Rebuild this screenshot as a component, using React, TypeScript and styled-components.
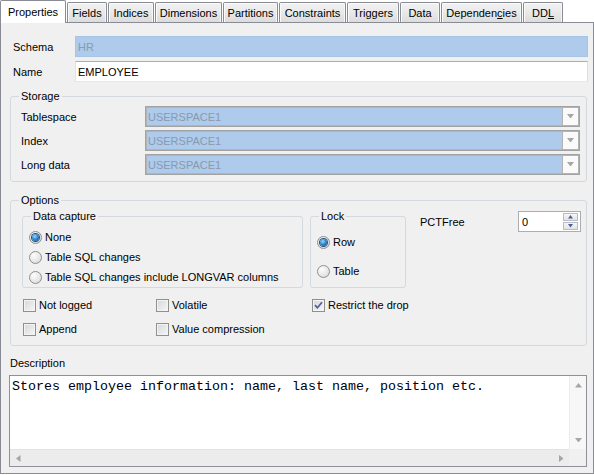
import React from 'react';
import styled, { createGlobalStyle } from 'styled-components';

const GlobalStyle = createGlobalStyle`
  html, body {
    margin: 0;
    padding: 0;
    background: #fff;
  }
  body {
    font-family: "Liberation Sans", Arial, sans-serif;
    font-size: 11px;
    color: #000;
  }
  * {
    box-sizing: border-box;
  }
`;

const Window = styled.div`
  width: 594px;
  height: 474px;
  display: flex;
  flex-direction: column;
`;

const TabStrip = styled.div`
  display: flex;
  align-items: flex-end;
  gap: 1px;
  height: 22px;
`;

const Tab = styled.div<{ $w: number; $active?: boolean }>`
  width: ${p => p.$w}px;
  height: ${p => (p.$active ? 23 : 20)}px;
  margin-bottom: ${p => (p.$active ? -1 : 0)}px;
  position: relative;
  z-index: ${p => (p.$active ? 2 : 0)};
  display: flex;
  align-items: center;
  justify-content: center;
  padding-top: ${p => (p.$active ? 0 : 1)}px;
  border: 1px solid #898c95;
  border-bottom: none;
  border-radius: 2px 2px 0 0;
  background: ${p => (p.$active ? '#fff' : 'linear-gradient(#f2f2f2, #e9e9e9 50%, #dcdcdc)')};
  box-shadow: ${p => (p.$active ? 'none' : 'inset 1px 1px 0 #fbfbfb, inset -1px 0 0 #f6f6f6')};
  white-space: nowrap;
`;

const Panel = styled.div`
  flex: 1;
  display: flex;
  flex-direction: column;
  border: 1px solid #898c95;
  background: #f0f0f0;
  padding: 13px 5px 0 8px;
`;

const FieldGrid = styled.div`
  display: grid;
  grid-template-columns: 62px 1fr;
  row-gap: 4px;
  align-items: center;
  margin-left: 4px;
`;

const TextBox = styled.div<{ $disabled?: boolean }>`
  height: 21px;
  display: flex;
  align-items: center;
  padding: 0 2px;
  border: 1px solid;
  border-color: ${p => (p.$disabled ? '#a9c5e6' : '#abadb3 #dbdfe6 #e3e9ef #e2e3ea')};
  background: ${p => (p.$disabled ? '#aecbeb' : '#fff')};
  color: ${p => (p.$disabled ? '#8a99ae' : '#000')};
`;

const Group = styled.fieldset<{ $top?: number }>`
  margin: ${p => p.$top ?? 0}px 1px 0 1px;
  padding: 0;
  min-width: 0;
  border: 1px solid #d3d9de;
  border-radius: 3px;
`;

const Legend = styled.legend<{ $offset?: number }>`
  padding: 0 2px;
  margin-left: ${p => p.$offset ?? 8}px;
  line-height: 13px;
  font-size: 11px;
`;

const ComboGrid = styled.div`
  display: grid;
  grid-template-columns: 124px 1fr;
  row-gap: 3px;
  align-items: center;
  padding: 3px 6px 6px 10px;
`;

const Combo = styled.div`
  height: 21px;
  display: flex;
  align-items: stretch;
  border: 1px solid #a3a3a3;
  box-shadow: inset 0 0 0 1px #b3b3b3;
  background: #aecbeb;
  color: #8a99ae;
`;

const ComboText = styled.span`
  flex: 1;
  display: flex;
  align-items: center;
  padding-left: 2px;
`;

const ComboButton = styled.span`
  width: 16px;
  margin: 1px 1px 1px 0;
  display: flex;
  align-items: center;
  justify-content: center;
  background: #fafafa;
  border-left: 1px solid #b3b3b3;
`;

const OptionsBody = styled.div`
  display: flex;
  flex-direction: column;
  padding: 3px 0 6px 11px;
`;

const TopRow = styled.div`
  display: flex;
  align-items: flex-start;
`;

const SubGroup = styled.fieldset<{ $w: number; $gap?: number }>`
  width: ${p => p.$w}px;
  margin: 0 0 0 ${p => p.$gap ?? 0}px;
  padding: 0;
  min-width: 0;
  align-self: stretch;
  border: 1px solid #d3d9de;
  border-radius: 3px;
`;

const RadioList = styled.div<{ $pt: number; $gap: number; $pb?: number }>`
  display: flex;
  flex-direction: column;
  gap: ${p => p.$gap}px;
  padding: ${p => p.$pt}px 0 ${p => p.$pb ?? 0}px 6px;
`;

const OptionRow = styled.label`
  height: 20px;
  display: flex;
  align-items: center;
  gap: 3px;
  white-space: nowrap;
`;

const RadioDot = styled.span<{ $on?: boolean }>`
  width: 13px;
  height: 13px;
  flex: none;
  border-radius: 50%;
  border: 1px solid #8f8f8f;
  background: radial-gradient(circle at 35% 30%, #fdfdfd, #e6e6e6 60%, #cfcfcf);
  display: flex;
  align-items: center;
  justify-content: center;

  &::after {
    content: '';
    display: ${p => (p.$on ? 'block' : 'none')};
    width: 7px;
    height: 7px;
    border-radius: 50%;
    background: radial-gradient(circle at 40% 35%, #9ad8fb, #2c86cc 50%, #124a88);
    box-shadow: 0 0 0 1px #1c4f80;
  }
`;

const CheckBoxBox = styled.span`
  width: 13px;
  height: 13px;
  flex: none;
  border: 1px solid #8e8f8f;
  background: linear-gradient(135deg, #d4d6d9, #f7f7f7);
  box-shadow: inset 0 0 0 1px #f4f4f4;
  display: flex;
  align-items: center;
  justify-content: center;
`;

const PctBlock = styled.div`
  flex: 1;
  height: 21px;
  margin: 1px 0 0 14px;
  padding-right: 5px;
  display: flex;
  align-items: center;
  justify-content: space-between;
`;

const Spinner = styled.div`
  width: 63px;
  height: 21px;
  display: flex;
  align-items: center;
  border: 1px solid #abadb3;
  background: #fff;
  padding-left: 3px;
`;

const SpinValue = styled.span`
  flex: 1;
`;

const SpinButtons = styled.div`
  width: 15px;
  height: 17px;
  margin-right: 2px;
  display: flex;
  flex-direction: column;
  gap: 1px;
`;

const SpinButton = styled.span`
  flex: 1;
  display: flex;
  align-items: center;
  justify-content: center;
  border: 1px solid #b8bcc6;
  background: linear-gradient(#f6f6f6, #e2e2e2);
`;

const CheckGrid = styled.div`
  display: grid;
  grid-template-columns: 133px 156px 1fr;
  grid-auto-rows: 20px;
  row-gap: 4px;
  margin: 7px 0 0 1px;
`;

const DescLabel = styled.div`
  margin: 11px 0 0 1px;
  line-height: 13px;
`;

const Memo = styled.div`
  height: 92px;
  margin: 5px 1px 0 0;
  border: 1px solid #8e9198;
  background: #fff;
  display: grid;
  grid-template-columns: 1fr 17px;
  grid-template-rows: 1fr 17px;
`;

const MemoText = styled.div`
  padding: 3px 2px;
  font-family: "Liberation Mono", "Courier New", monospace;
  font-size: 13.33px;
  line-height: 16px;
  white-space: nowrap;
  overflow: hidden;
`;

const VScroll = styled.div`
  display: flex;
  flex-direction: column;
  justify-content: space-between;
  align-items: center;
  padding: 7px 0;
  background: #f7f7f7;
  border-left: 1px solid #ececec;
`;

const HScroll = styled.div`
  display: flex;
  justify-content: space-between;
  align-items: center;
  padding: 0 6px;
  background: #ececec;
  border-top: 1px solid #e2e2e2;
`;

const ScrollCorner = styled.div`
  background: #f0f0f0;
`;

const Arrow = ({ dir, color = '#a6a6a6', size = 7 }: { dir: 'up' | 'down' | 'left' | 'right'; color?: string; size?: number }) => {
  const h = Math.ceil(size / 2) + 0.5;
  const pts = {
    up: `0,${h} ${size / 2},0 ${size},${h}`,
    down: `0,0 ${size / 2},${h} ${size},0`,
    left: `${h},0 0,${size / 2} ${h},${size}`,
    right: `0,0 ${h},${size / 2} 0,${size}`,
  }[dir];
  const vertical = dir === 'up' || dir === 'down';
  return (
    <svg width={vertical ? size : h} height={vertical ? h : size} style={{ display: 'block' }}>
      <polygon points={pts} fill={color} />
    </svg>
  );
};

const tabs = [
  { label: 'Properties', w: 66 },
  { label: 'Fields', w: 40 },
  { label: 'Indices', w: 46 },
  { label: 'Dimensions', w: 67 },
  { label: 'Partitions', w: 55 },
  { label: 'Constraints', w: 67 },
  { label: 'Triggers', w: 52 },
  { label: 'Data', w: 40 },
  { label: 'Dependencies', w: 81 },
  { label: 'DDL', w: 40 },
];

const Radio = ({ label, on }: { label: string; on?: boolean }) => (
  <OptionRow>
    <RadioDot $on={on} />
    {label}
  </OptionRow>
);

const Check = ({ label, on }: { label: string; on?: boolean }) => (
  <OptionRow>
    <CheckBoxBox>
      {on && (
        <svg width="9" height="9" viewBox="0 0 9 9">
          <path d="M1 4.2 L3.4 6.8 L8 1.2" fill="none" stroke="#4b5f9c" strokeWidth="1.7" />
        </svg>
      )}
    </CheckBoxBox>
    {label}
  </OptionRow>
);

const TabLabel = ({ label }: { label: string }) => {
  if (label === 'Dependencies') return <>Dependen<u>c</u>ies</>;
  if (label === 'DDL') return <>DD<u>L</u></>;
  return <>{label}</>;
};

export default function App() {
  return (
    <>
      <GlobalStyle />
      <Window>
        <TabStrip>
          {tabs.map((t, i) => (
            <Tab key={t.label} $w={t.w} $active={i === 0}>
              <TabLabel label={t.label} />
            </Tab>
          ))}
        </TabStrip>
        <Panel>
          <FieldGrid>
            <span>Schema</span>
            <TextBox $disabled>HR</TextBox>
            <span>Name</span>
            <TextBox>EMPLOYEE</TextBox>
          </FieldGrid>

          <Group $top={8}>
            <Legend>Storage</Legend>
            <ComboGrid>
              {['Tablespace', 'Index', 'Long data'].map(l => (
                <React.Fragment key={l}>
                  <span>{l}</span>
                  <Combo>
                    <ComboText>USERSPACE1</ComboText>
                    <ComboButton>
                      <Arrow dir="down" />
                    </ComboButton>
                  </Combo>
                </React.Fragment>
              ))}
            </ComboGrid>
          </Group>

          <Group $top={12}>
            <Legend>Options</Legend>
            <OptionsBody>
              <TopRow>
                <SubGroup $w={281}>
                  <Legend>Data capture</Legend>
                  <RadioList $pt={4} $gap={0}>
                    <Radio label="None" on />
                    <Radio label="Table SQL changes" />
                    <Radio label="Table SQL changes include LONGVAR columns" />
                  </RadioList>
                </SubGroup>
                <SubGroup $w={96} $gap={7}>
                  <Legend>Lock</Legend>
                  <RadioList $pt={9} $gap={9} $pb={6}>
                    <Radio label="Row" on />
                    <Radio label="Table" />
                  </RadioList>
                </SubGroup>
                <PctBlock>
                  <span>PCTFree</span>
                  <Spinner>
                    <SpinValue>0</SpinValue>
                    <SpinButtons>
                      <SpinButton>
                        <Arrow dir="up" color="#4d6190" size={5} />
                      </SpinButton>
                      <SpinButton>
                        <Arrow dir="down" color="#4d6190" size={5} />
                      </SpinButton>
                    </SpinButtons>
                  </Spinner>
                </PctBlock>
              </TopRow>
              <CheckGrid>
                <Check label="Not logged" />
                <Check label="Volatile" />
                <Check label="Restrict the drop" on />
                <Check label="Append" />
                <Check label="Value compression" />
              </CheckGrid>
            </OptionsBody>
          </Group>

          <DescLabel>Description</DescLabel>
          <Memo>
            <MemoText>Stores employee information: name, last name, position etc.</MemoText>
            <VScroll>
              <Arrow dir="up" />
              <Arrow dir="down" />
            </VScroll>
            <HScroll>
              <Arrow dir="left" />
              <Arrow dir="right" />
            </HScroll>
            <ScrollCorner />
          </Memo>
        </Panel>
      </Window>
    </>
  );
}
